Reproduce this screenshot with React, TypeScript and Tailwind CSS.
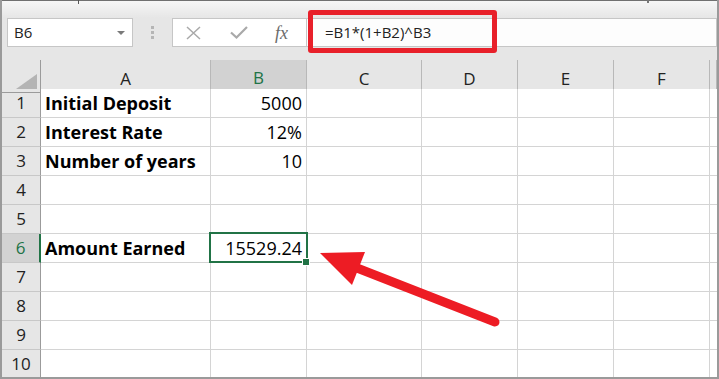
import React from 'react';

type Row = { n: number; a?: string; b?: string; sel?: boolean };

const rows: Row[] = [
  { n: 1, a: 'Initial Deposit', b: '5000' },
  { n: 2, a: 'Interest Rate', b: '12%' },
  { n: 3, a: 'Number of years', b: '10' },
  { n: 4 },
  { n: 5 },
  { n: 6, a: 'Amount Earned', b: '15529.24', sel: true },
  { n: 7 },
  { n: 8 },
  { n: 9 },
  { n: 10 },
];

const gridCols = 'grid grid-cols-[39px_170px_96px_115px_96px_96px_96px_1fr]';

function HeaderRow() {
  const letters = ['A', 'B', 'C', 'D', 'E', 'F', ''];
  return (
    <div className={`${gridCols} h-[29px] mt-[13px]`}>
      <div className="relative border-r border-r-[#9b9b9b] border-b border-b-[#9b9b9b] bg-[#e6e6e6]">
        <svg className="absolute right-[3px] bottom-[3px]" width="21" height="15" viewBox="0 0 21 15">
          <polygon points="21,0 21,15 0,15" fill="#b4b4b4" />
        </svg>
      </div>
      {letters.map((l, i) =>
        l === 'B' ? (
          <div
            key={i}
            className="flex items-center justify-center pt-[5px] bg-[#d2d2d2] border-r border-r-[#b8b8b8] border-b-2 border-b-[#217346] text-[17px] text-[#217346]"
          >
            {l}
          </div>
        ) : (
          <div
            key={i}
            className="flex items-center justify-center pt-[6px] bg-[#e6e6e6] border-r border-r-[#b8b8b8] border-b border-b-[#9b9b9b] text-[17px] text-[#222222]"
          >
            {l}
          </div>
        )
      )}
    </div>
  );
}

function DataRow({ r }: { r: Row }) {
  return (
    <div className={`${gridCols} h-[29px]`}>
      {r.sel ? (
        <div className="flex items-center justify-center bg-[#d2d2d2] border-r-2 border-r-[#217346] border-b border-b-[#c8c8c8] text-[17px] text-[#217346]">
          {r.n}
        </div>
      ) : (
        <div className="flex items-center justify-center bg-[#e6e6e6] border-r border-r-[#9b9b9b] border-b border-b-[#c8c8c8] text-[17px] text-[#222222]">
          {r.n}
        </div>
      )}
      <div className="flex items-center pl-[4px] bg-white border-r border-b border-[#d4d4d4] font-bold text-[18px] text-black whitespace-nowrap">
        {r.a ?? ''}
      </div>
      <div className="flex items-center justify-end pr-[4px] bg-white border-r border-b border-[#d4d4d4] text-[18px] text-black whitespace-nowrap">
        {r.b ?? ''}
      </div>
      <div className="bg-white border-r border-b border-[#d4d4d4]" />
      <div className="bg-white border-r border-b border-[#d4d4d4]" />
      <div className="bg-white border-r border-b border-[#d4d4d4]" />
      <div className="bg-white border-r border-b border-[#d4d4d4]" />
      <div className="bg-white border-b border-[#d4d4d4]" />
    </div>
  );
}

export default function App() {
  return (
    <div className="relative w-[719px] h-[379px] overflow-hidden bg-[#e6e6e6] border-l-2 border-r-2 border-b-2 border-[#9a9a9a] font-['Open_Sans','Noto_Sans',sans-serif]">
      {/* top strip */}
      <div className="h-[18px] border-t border-t-[#707070] bg-linear-to-b from-[#f6f6f6] to-[#e6e6e6]" />

      {/* formula bar */}
      <div className="flex h-[29px]">
        <div className="ml-[5px] w-[126px] flex items-center justify-between pl-[6px] pr-[7px] bg-white border border-[#c6c6c6] text-[15px] text-[#222222]">
          <span>B6</span>
          <svg width="8" height="4" viewBox="0 0 8 4">
            <polygon points="0,0 8,0 4,4" fill="#7a7a7a" />
          </svg>
        </div>
        <div className="ml-[18px] flex flex-col justify-center gap-[2px]">
          <div className="w-[3px] h-[3px] bg-[#b5b5b5]" />
          <div className="w-[3px] h-[3px] bg-[#b5b5b5]" />
          <div className="w-[3px] h-[3px] bg-[#b5b5b5]" />
        </div>
        <div className="ml-[18px] w-[135px] flex items-center bg-white border border-[#c6c6c6]">
          <svg className="ml-[13px]" width="15" height="14" viewBox="0 0 15 14">
            <path d="M1 1 L14 13 M14 1 L1 13" stroke="#a9a9a9" strokeWidth="1.5" fill="none" />
          </svg>
          <svg className="ml-[29px]" width="18" height="13" viewBox="0 0 18 13">
            <path d="M1 6.5 L6.5 11.5 L17 1" stroke="#a9a9a9" strokeWidth="2.2" fill="none" />
          </svg>
          <span className="ml-[27px] font-['Liberation_Serif',serif] italic text-[18px] text-[#6b6b6b] leading-none">
            fx
          </span>
        </div>
        <div className="flex-1 flex items-center pl-[18px] bg-[#fdfdfd] border border-l-0 border-[#c6c6c6] text-[15px] text-[#222222]">
          =B1*(1+B2)^B3
        </div>
      </div>

      <HeaderRow />
      {rows.map((r) => (
        <DataRow key={r.n} r={r} />
      ))}

      {/* ribbon remnants */}
      <div className="absolute left-[76px] top-0 w-px h-[4px] bg-[#555555]" />
      <div className="absolute left-[645px] top-0 w-[2px] h-[3px] bg-[#777777]" />

      {/* selected cell */}
      <div className="absolute left-[207px] top-[232px] w-[99px] h-[31px] border-2 border-[#217346]" />
      <div className="absolute left-[300px] top-[258px] w-[8px] h-[8px] bg-[#217346] border border-white" />

      {/* red highlight box */}
      <div className="absolute left-[306px] top-[10px] w-[189px] h-[43px] border-[5px] border-[#e8202a] rounded-[3px]" />

      {/* red arrow */}
      <svg className="absolute left-[-2px] top-0 pointer-events-none" width="719" height="379" viewBox="0 0 719 379">
        <line x1="357" y1="268" x2="495" y2="322" stroke="#ed1c24" strokeWidth="9" strokeLinecap="round" />
        <polygon points="320,253 365,252 352,285" fill="#ed1c24" />
      </svg>
    </div>
  );
}
